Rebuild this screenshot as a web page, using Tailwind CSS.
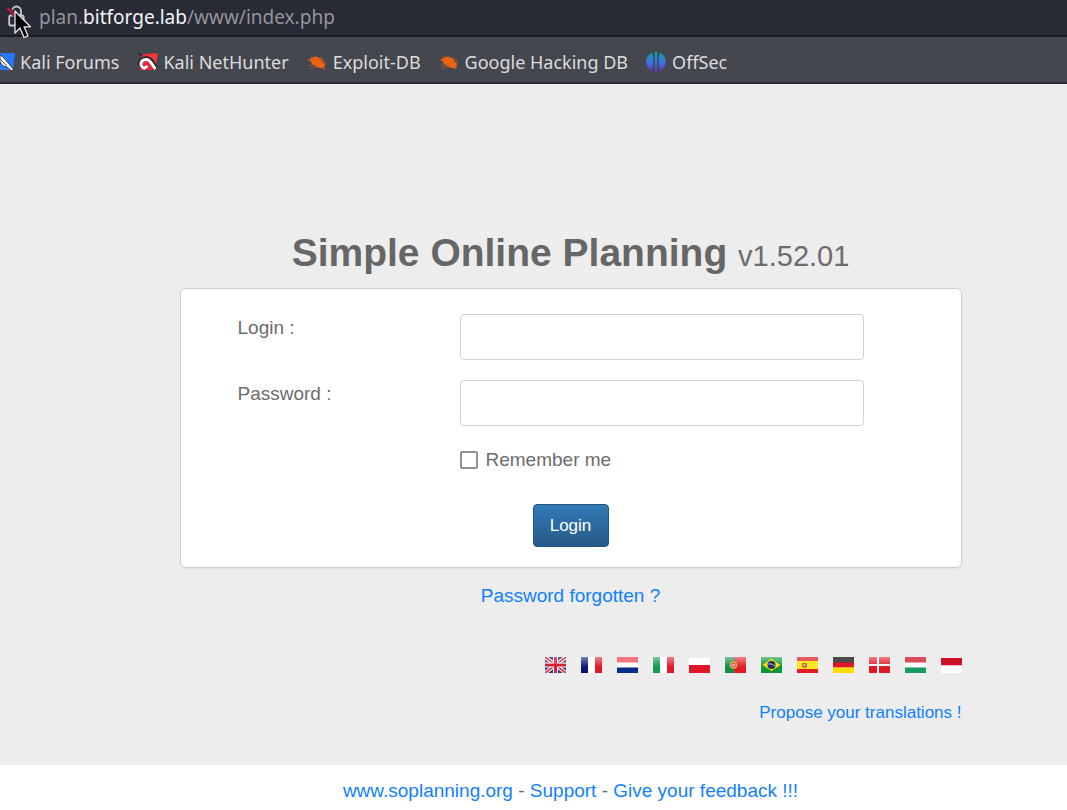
<!DOCTYPE html>
<html lang="en">
<head>
<meta charset="utf-8">
<title>Simple Online Planning</title>
<script src="https://cdn.jsdelivr.net/npm/@tailwindcss/browser@4"></script>
</head>
<body class="flex min-h-screen flex-col overflow-x-hidden bg-[#ededed] font-['Liberation_Sans',sans-serif] text-[19px] leading-7 text-[#6c6c6c]">

<header class="font-['Noto_Sans',sans-serif] whitespace-nowrap">
  <div class="relative flex h-[37px] items-center border-b-2 border-[#1b1c22] bg-[#282a36] pb-0.5 pl-[7px]">
    <button type="button" aria-label="Connection not secure" class="h-6 w-5">
      <svg class="h-6 w-5" viewBox="0 0 20 24" fill="none"><rect x="2.200" y="10.500" width="14.500" height="10" rx="1.600" stroke="#c9c9cc" stroke-width="1.800"/><path d="M5 10.500V6a4.500 4.500 0 0 1 9 0v4.500" stroke="#c9c9cc" stroke-width="1.800"/><path d="M.5 3l12 12" stroke="#282a36" stroke-width="4"/><path d="M.5 3l12 12" stroke="#d90f3f" stroke-width="2"/></svg>
    </button>
    <a href="#" class="ml-3 text-[19px] leading-6 text-[#94959b]">plan.<span class="text-[#f4f4f5]">bitforge.lab</span>/www/index.php</a>
    <svg class="absolute top-[10px] left-[14px] z-10 h-[30px] w-[18px]" viewBox="0 0 18 30"><path d="M1 1v22l5-5 4 9.500 4-1.700-4-9h6.500z" fill="#050505" stroke="#e8e8e8" stroke-width="1.300" stroke-linejoin="round"/></svg>
  </div>
  <nav aria-label="Bookmarks" class="flex h-[47px] items-center gap-[18px] border-b-2 border-[#2b2a2f] bg-[#44474d] pt-1 text-[18px] leading-6 text-[#dcdcdd]">
    <a href="#" class="flex items-center gap-[5px]">
      <svg class="h-5 w-[15px]" viewBox="0 0 15 20"><path d="M0 1h15l-2 17H0z" fill="#2777ff"/><path d="M0 3c4 2 6 6 9 9l5 6-3 .5-4-3.500c-3 0-5-2-7-5z" fill="#f5f5f5" stroke="#222" stroke-width=".8"/><path d="M0 7l7 7" stroke="#555" stroke-width="1"/></svg>
      Kali Forums</a>
    <a href="#" class="flex items-center gap-[5px]">
      <svg class="h-5 w-[21px]" viewBox="0 0 21 20"><path d="M6 2l14.500-.5L18 18H3L.5 14z" fill="#e8283a"/><path d="M8 2l12.500-.5L19 12z" fill="#ff3535"/><path d="M0 .5l5 2L4 4z" fill="#1d1d22"/><path d="M5.500 15.500C1 12 3.500 7 9 6.500c6-.5 7 6 10 10.500" fill="none" stroke="#26262c" stroke-width="4.600"/><path d="M8 16.500C2 14.500 3 8 9 7.500c5-.3 5.500 5.500 9.500 9.500" fill="none" stroke="#fff" stroke-width="3"/><path d="M7 16.500l3.500-2.500" stroke="#fff" stroke-width="2.500"/></svg>
      Kali NetHunter</a>
    <a href="#" class="flex items-center gap-[6px]">
      <svg class="h-5 w-5" viewBox="0 0 20 20"><path d="M2 7l6-2.500L13 6l5 6-1 4.500-6-1L5 12z" fill="#f0640f"/><path d="M0 8l6 1M4 4l4 4M9 3l2 5M13 5l5 4M12 10l7 1M2 14l6-2M3 17l8-4M16 14l1 4" stroke="#b85a2c" stroke-width=".8"/></svg>
      Exploit-DB</a>
    <a href="#" class="flex items-center gap-[6px]">
      <svg class="h-5 w-5" viewBox="0 0 20 20"><path d="M2 7l6-2.500L13 6l5 6-1 4.500-6-1L5 12z" fill="#f0640f"/><path d="M0 8l6 1M4 4l4 4M9 3l2 5M13 5l5 4M12 10l7 1M2 14l6-2M3 17l8-4M16 14l1 4" stroke="#b85a2c" stroke-width=".8"/></svg>
      Google Hacking DB</a>
    <a href="#" class="flex items-center gap-[6px]">
      <svg class="h-5 w-5" viewBox="0 0 20 20"><defs><linearGradient id="os" x1="0" y1="0" x2="0" y2="20" gradientUnits="userSpaceOnUse"><stop stop-color="#08a6bd"/><stop offset=".5" stop-color="#3974d5"/><stop offset="1" stop-color="#682bd7"/></linearGradient></defs><path d="M6 1C8 6 8 13 5.500 18.500-2 15-1.500 4 6 1zM14 1c-2 5-2 12 .5 17.500C22 15 21.500 4 14 1zM8.800 0h2.400v20H8.800z" fill="url(#os)"/></svg>
      OffSec</a>
  </nav>
</header>

<main class="flex flex-1 flex-col items-center pt-[145px] pl-[74px]">
  <h1 class="text-[39px] leading-[48px] font-bold text-[#666]">Simple Online Planning <small class="text-[29px] font-normal text-[#6c6c6c]">v1.52.01</small></h1>

  <div class="w-full max-w-[782px]">
    <form class="mt-2 rounded-md border border-[#d0d0d0] bg-white pt-[25px] pb-5 pl-[57px] shadow-xs">
      <div class="grid grid-cols-[222px_404px] gap-y-5">
        <label for="login">Login :</label>
        <input id="login" type="text" class="h-[46px] rounded border border-[#ced4da] bg-white px-3 outline-none">
        <label for="password">Password :</label>
        <input id="password" type="password" class="h-[46px] rounded border border-[#ced4da] bg-white px-3 outline-none">
        <label class="col-start-2 flex items-center gap-2"><input type="checkbox" class="h-[18px] w-[18px] appearance-none rounded-xs border-2 border-[#8f8f9d] bg-white">Remember me</label>
      </div>
      <div class="mt-[30px] flex justify-center pr-[57px]">
        <button type="submit" class="h-[43px] w-[76px] rounded border border-[#245580] bg-linear-to-b from-[#337ab7] to-[#265a88] text-[17px] text-white">Login</button>
      </div>
    </form>

    <p class="mt-[14px] text-center"><a href="#" class="text-[#117fff]">Password forgotten ?</a></p>

    <div class="mt-[47px] flex justify-end gap-[15px]">
      <a href="#" aria-label="English"><svg class="h-4 w-[21px]" viewBox="0 0 21 16"><rect width="21" height="16" fill="#273782"/><path d="M0 0l21 16M21 0L0 16" stroke="#f7dce0" stroke-width="4"/><path d="M0 0l21 16M21 0L0 16" stroke="#d32b40" stroke-width="1.500"/><path d="M10.500 0v16M0 8h21" stroke="#fff" stroke-width="5"/><path d="M10.500 0v16M0 8h21" stroke="#d32037" stroke-width="3"/><path d="M0 0h21v7H0z" fill="#fff" opacity=".18"/></svg></a>
      <a href="#" aria-label="Français"><svg class="h-4 w-[21px]" viewBox="0 0 21 16"><defs><linearGradient id="gloss" x1="0" y1="0" x2="0" y2="1"><stop stop-color="#fff" stop-opacity=".45"/><stop offset="1" stop-color="#fff" stop-opacity="0"/></linearGradient></defs><path d="M0 0h7v16H0z" fill="#0b1776"/><path d="M7 0h7v16H7z" fill="#fff"/><path d="M14 0h7v16h-7z" fill="#df1727"/><path d="M0 0h21v10H0z" fill="url(#gloss)"/></svg></a>
      <a href="#" aria-label="Nederlands"><svg class="h-4 w-[21px]" viewBox="0 0 21 16"><path d="M0 0h21v6H0z" fill="#f4777b"/><path d="M0 5.500h21v5H0z" fill="#fff"/><path d="M0 10.500h21V16H0z" fill="#062d89"/></svg></a>
      <a href="#" aria-label="Italiano"><svg class="h-4 w-[21px]" viewBox="0 0 21 16"><path d="M0 0h7v16H0z" fill="#139950"/><path d="M7 0h7v16H7z" fill="#fff"/><path d="M14 0h7v16h-7z" fill="#df1727"/><path d="M0 0h21v10H0z" fill="url(#gloss)"/></svg></a>
      <a href="#" aria-label="Polski"><svg class="h-4 w-[21px]" viewBox="0 0 21 16"><path d="M0 1h21v7H0z" fill="#fff"/><path d="M0 8h21v8H0z" fill="#df1727"/></svg></a>
      <a href="#" aria-label="Português"><svg class="h-4 w-[21px]" viewBox="0 0 21 16"><path d="M0 0h9v16H0z" fill="#168c4a"/><path d="M9 0h12v16H9z" fill="#e11c24"/><path d="M0 0h21v10H0z" fill="url(#gloss)"/><circle cx="8.500" cy="8" r="3" fill="#e9443c" stroke="#d9b04a" stroke-width="1.500"/><circle cx="8.500" cy="8" r="1.300" fill="#b9c4ee"/></svg></a>
      <a href="#" aria-label="Português do Brasil"><svg class="h-4 w-[21px]" viewBox="0 0 21 16"><path d="M0 0h21v16H0z" fill="#0c9639"/><path d="M0 0h21v10H0z" fill="url(#gloss)"/><path d="M10.500 2l9 6-9 6-9-6z" fill="#ffe000"/><circle cx="10.500" cy="8" r="4" fill="#1a2e73"/><path d="M7 7q4-1 7 2" fill="none" stroke="#a9bdd8"/></svg></a>
      <a href="#" aria-label="Español"><svg class="h-4 w-[21px]" viewBox="0 0 21 16"><path d="M0 0h21v4H0z" fill="#e45a61"/><path d="M0 4h21v8H0z" fill="#ffea22"/><path d="M0 12h21v4H0z" fill="#e11c24"/><path d="M5 6h5v4l-2 1.500L5 10z" fill="#cc713d"/><path d="M6.500 7h2v2h-2z" fill="#e4b5a2"/></svg></a>
      <a href="#" aria-label="Deutsch"><svg class="h-4 w-[21px]" viewBox="0 0 21 16"><path d="M0 0h21v6H0z" fill="#4b4b4b"/><path d="M0 5.500h21v5H0z" fill="#df1724"/><path d="M0 10.500h21V16H0z" fill="#ffdb00"/></svg></a>
      <a href="#" aria-label="Dansk"><svg class="h-4 w-[21px]" viewBox="0 0 21 16"><path d="M0 0h21v16H0z" fill="#df1727"/><path d="M0 0h21v10H0z" fill="url(#gloss)"/><path d="M9 0v16M0 8h21" stroke="#fff" stroke-width="2"/></svg></a>
      <a href="#" aria-label="Magyar"><svg class="h-4 w-[21px]" viewBox="0 0 21 16"><path d="M0 0h21v6H0z" fill="#d94c58"/><path d="M0 5.500h21v5H0z" fill="#fff"/><path d="M0 10.500h21V16H0z" fill="#199b62"/></svg></a>
      <a href="#" aria-label="Bahasa Indonesia"><svg class="h-4 w-[21px]" viewBox="0 0 21 16"><path d="M0 1h21v7.500H0z" fill="#ce1126"/><path d="M0 8.500h21V16H0z" fill="#fff"/></svg></a>
    </div>

    <p class="mt-[26px] text-right text-[17px]"><a href="#" class="text-[#117fff]">Propose your translations !</a></p>
  </div>
</main>

<footer class="bg-white pt-3 pb-[5px] pl-[74px] text-center">
  <a href="#" class="text-[#117fff]">www.soplanning.org</a> - <a href="#" class="text-[#117fff]">Support</a> - <a href="#" class="text-[#117fff]">Give your feedback !!!</a>
</footer>
</body>
</html>
